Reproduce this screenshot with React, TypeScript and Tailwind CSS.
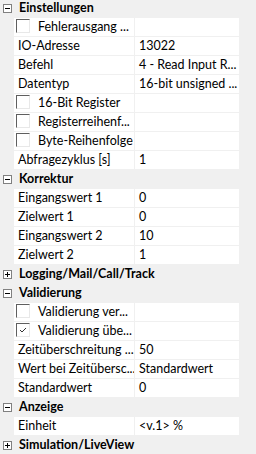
import { Fragment } from 'react';

type Row =
    | { kind: 'cat'; label: string; open: boolean }
    | { kind: 'prop'; label: string; value?: string; check?: boolean };

const rows: Row[] = [
    { kind: 'cat', label: 'Einstellungen', open: true },
    { kind: 'prop', label: 'Fehlerausgang ...', check: false },
    { kind: 'prop', label: 'IO-Adresse', value: '13022' },
    { kind: 'prop', label: 'Befehl', value: '4 - Read Input R...' },
    { kind: 'prop', label: 'Datentyp', value: '16-bit unsigned ...' },
    { kind: 'prop', label: '16-Bit Register', check: false },
    { kind: 'prop', label: 'Registerreihenf...', check: false },
    { kind: 'prop', label: 'Byte-Reihenfolge', check: false },
    { kind: 'prop', label: 'Abfragezyklus [s]', value: '1' },
    { kind: 'cat', label: 'Korrektur', open: true },
    { kind: 'prop', label: 'Eingangswert 1', value: '0' },
    { kind: 'prop', label: 'Zielwert 1', value: '0' },
    { kind: 'prop', label: 'Eingangswert 2', value: '10' },
    { kind: 'prop', label: 'Zielwert 2', value: '1' },
    { kind: 'cat', label: 'Logging/Mail/Call/Track', open: false },
    { kind: 'cat', label: 'Validierung', open: true },
    { kind: 'prop', label: 'Validierung ver...', check: false },
    { kind: 'prop', label: 'Validierung übe...', check: true },
    { kind: 'prop', label: 'Zeitüberschreitung ...', value: '50' },
    { kind: 'prop', label: 'Wert bei Zeitübersc...', value: 'Standardwert' },
    { kind: 'prop', label: 'Standardwert', value: '0' },
    { kind: 'cat', label: 'Anzeige', open: true },
    { kind: 'prop', label: 'Einheit', value: '<v.1> %' },
    { kind: 'cat', label: 'Simulation/LiveView', open: false },
];

// kleines +/- Kästchen wie im WinForms PropertyGrid
function ToggleBox({ open }: { open: boolean }) {
    return (
        <svg width="9" height="9" viewBox="0 0 9 9" className="shrink-0">
            <rect x="0.5" y="0.5" width="8" height="8" fill="#fff" stroke="#808080" />
            <line x1="2" y1="4.5" x2="7" y2="4.5" stroke="#000" />
            {!open && <line x1="4.5" y1="2" x2="4.5" y2="7" stroke="#000" />}
        </svg>
    );
}

function CheckBox({ checked }: { checked: boolean }) {
    return (
        <div className="w-[14px] h-[14px] border-l border-t border-[#5f5f5f] border-r border-b border-r-[#e8e8e8] border-b-[#e8e8e8] bg-white shrink-0">
            {checked && (
                <svg width="12" height="12" viewBox="0 0 12 12">
                    <polyline points="3,6 5,8 9,4" fill="none" stroke="#333" strokeWidth="1" />
                </svg>
            )}
        </div>
    );
}

export default function App() {
    return (
        <div
            className="w-[256px] h-[454px] bg-[#f0f0f0] overflow-hidden text-[12.5px] text-black"
            style={{ fontFamily: 'Lato, "Liberation Sans", sans-serif' }}
        >
            {rows.map((row, i) => (
                <Fragment key={i}>
                    {row.kind === 'cat' ? (
                        <div className={`flex items-center ${i === 0 ? 'h-[18px] -mt-px' : 'h-[18px]'} mb-px`}>
                            <div className="w-[19px] pl-[3px] flex items-center">
                                <ToggleBox open={row.open} />
                            </div>
                            <span className="font-bold whitespace-nowrap leading-[18px]">{row.label}</span>
                        </div>
                    ) : (
                        <div className="flex h-[18px] mb-px">
                            <div className="w-[14px] shrink-0" />
                            <div className="w-[120px] shrink-0 bg-white flex items-start overflow-hidden whitespace-nowrap">
                                {row.check !== undefined ? (
                                    <>
                                        <div className="pl-[2px] pt-px">
                                            <CheckBox checked={row.check} />
                                        </div>
                                        <span className="pl-[8px] leading-[18px]">{row.label}</span>
                                    </>
                                ) : (
                                    <span className="pl-[4px] leading-[18px]">{row.label}</span>
                                )}
                            </div>
                            <div className="w-px shrink-0" />
                            <div className="w-[104px] shrink-0 bg-white pl-[4px] leading-[18px] whitespace-nowrap overflow-hidden">
                                {row.value ?? ''}
                            </div>
                        </div>
                    )}
                </Fragment>
            ))}
        </div>
    );
}
